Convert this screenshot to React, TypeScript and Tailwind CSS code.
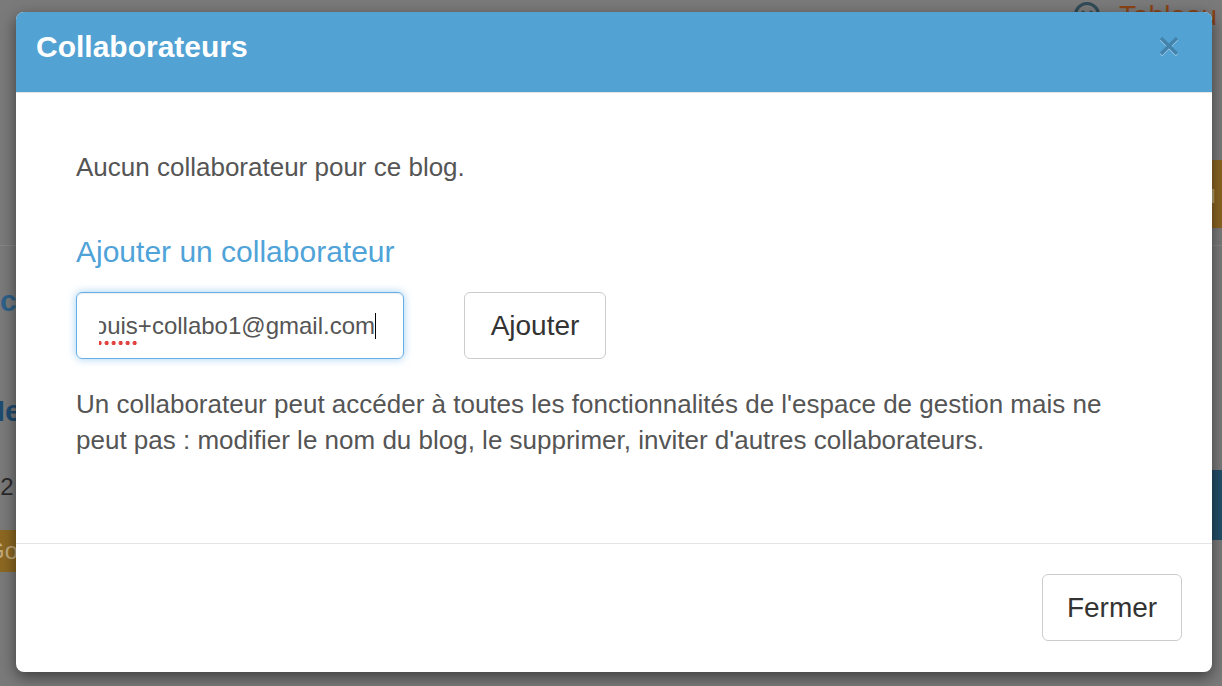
import React from "react";

const CloseIcon = () => (
  <svg width="22" height="22" viewBox="0 0 22 22" className="drop-shadow-[0_1px_0_rgba(255,255,255,0.45)]">
    <path d="M3 3 L19 19 M19 3 L3 19" stroke="#4383ab" strokeWidth="3.4" strokeLinecap="butt" />
  </svg>
);

const Smiley = () => (
  <svg width="28" height="28" viewBox="0 0 28 28" className="shrink-0">
    <circle cx="14" cy="14" r="11.5" fill="none" stroke="#2f4a57" strokeWidth="3" />
    <circle cx="10" cy="11" r="1.6" fill="#2f4a57" />
    <circle cx="18" cy="11" r="1.6" fill="#2f4a57" />
  </svg>
);

// page behind the modal, only slivers of it show through the backdrop
const PageBehind = () => (
  <div className="flex flex-col h-full font-['Liberation_Sans',Arial,sans-serif]">
    <div className="h-[30px] flex items-start pl-[1073px] pt-[1px] gap-[18px] whitespace-nowrap overflow-hidden">
      <Smiley />
      <span className="shrink-0 text-[28px] leading-[30px] text-[#8a4416]">Tableau de bord</span>
    </div>
    <div className="h-[216px] flex justify-end items-start pt-[130px] border-b border-[#868686]">
      <div className="-mr-[10px] h-[68px] px-[16px] flex items-center rounded-[4px] bg-[#8a6523] text-[26px] text-[#b9a27a] whitespace-nowrap">
        Nouveau
      </div>
    </div>
    <div className="flex justify-between flex-1">
      <div className="-ml-[20px] flex flex-col whitespace-nowrap">
        <div className="mt-[38px] text-[30px] font-bold leading-[34px] text-[#2d6089]">Écrire un article</div>
        <div className="mt-[76px] text-[30px] font-bold leading-[34px] text-[#1f4b70]">Mes articles</div>
        <div className="mt-[44px] ml-[7px] text-[24px] leading-[30px] text-[#2a2a2a]">12</div>
        <div className="mt-[28px] h-[42px] w-[60px] flex items-center rounded-[4px] bg-[#8c6822] pl-[6px] text-[24px] text-[#c4ab7c]">
          Go
        </div>
      </div>
      <div className="flex flex-col items-end">
        <div className="mt-[224px] -mr-[10px] h-[70px] w-[80px] flex items-center pl-[6px] rounded-[4px] bg-[#234e69] text-[26px] text-[#8aa2b2]">
          s
        </div>
      </div>
    </div>
  </div>
);

export default function App() {
  return (
    <div className="relative w-[1222px] h-[686px] overflow-hidden bg-[#7a7a7a]">
      <PageBehind />
      <div className="absolute inset-0 pl-[16px] pr-[10px] pt-[12px] font-['Liberation_Sans',Arial,sans-serif]">
        <div className="h-[660px] bg-white rounded-[8px] shadow-[0_5px_15px_rgba(0,0,0,0.5)] flex flex-col overflow-hidden">
          <div className="h-[81px] shrink-0 bg-[#52a2d4] border-b border-[#e7e5df] flex items-start justify-between pl-[20px] pr-[32px]">
            <h4 className="pt-[15px] text-[30px] leading-[40px] font-bold text-white">Collaborateurs</h4>
            <button className="mt-[23px]">
              <CloseIcon />
            </button>
          </div>

          <div className="flex-1 px-[60px] pt-[56px] text-[#555555]">
            <p className="text-[26px] leading-[36px]">Aucun collaborateur pour ce blog.</p>

            <h4 className="mt-[49px] text-[30px] leading-[36px] text-[#4fa3d8]">Ajouter un collaborateur</h4>

            <div className="mt-[22px] flex items-center gap-[60px]">
              <div className="w-[328px] h-[67px] rounded-[6px] border border-[#66afe9] shadow-[inset_0_1px_1px_rgba(0,0,0,0.075),0_0_8px_rgba(102,175,233,0.6)] pl-[22px] pr-[27px] flex items-center">
                <div className="flex-1 flex items-center justify-end overflow-hidden whitespace-nowrap text-[24px] leading-[44px] text-[#555555]">
                  <span>
                    <span className="pb-[7px] bg-[radial-gradient(circle,#e0413a_1.8px,transparent_2.3px)] bg-[length:7px_6px] bg-repeat-x bg-bottom">louis</span>
                    +collabo1@gmail.com
                  </span>
                  <span className="w-px h-[26px] bg-black shrink-0" />
                </div>
              </div>
              <button className="w-[142px] h-[67px] rounded-[6px] border border-[#cccccc] bg-white text-[28px] text-[#333333]">
                Ajouter
              </button>
            </div>

            <p className="mt-[27px] text-[26px] leading-[36px]">
              Un collaborateur peut accéder à toutes les fonctionnalités de l'espace de gestion mais ne peut pas : modifier le nom du blog, le supprimer, inviter d'autres collaborateurs.
            </p>
          </div>

          <div className="h-[129px] shrink-0 border-t border-[#e5e5e5] flex justify-end items-start pt-[30px] pr-[30px]">
            <button className="w-[140px] h-[67px] rounded-[6px] border border-[#cccccc] bg-white text-[28px] text-[#333333]">
              Fermer
            </button>
          </div>
        </div>
      </div>
    </div>
  );
}
